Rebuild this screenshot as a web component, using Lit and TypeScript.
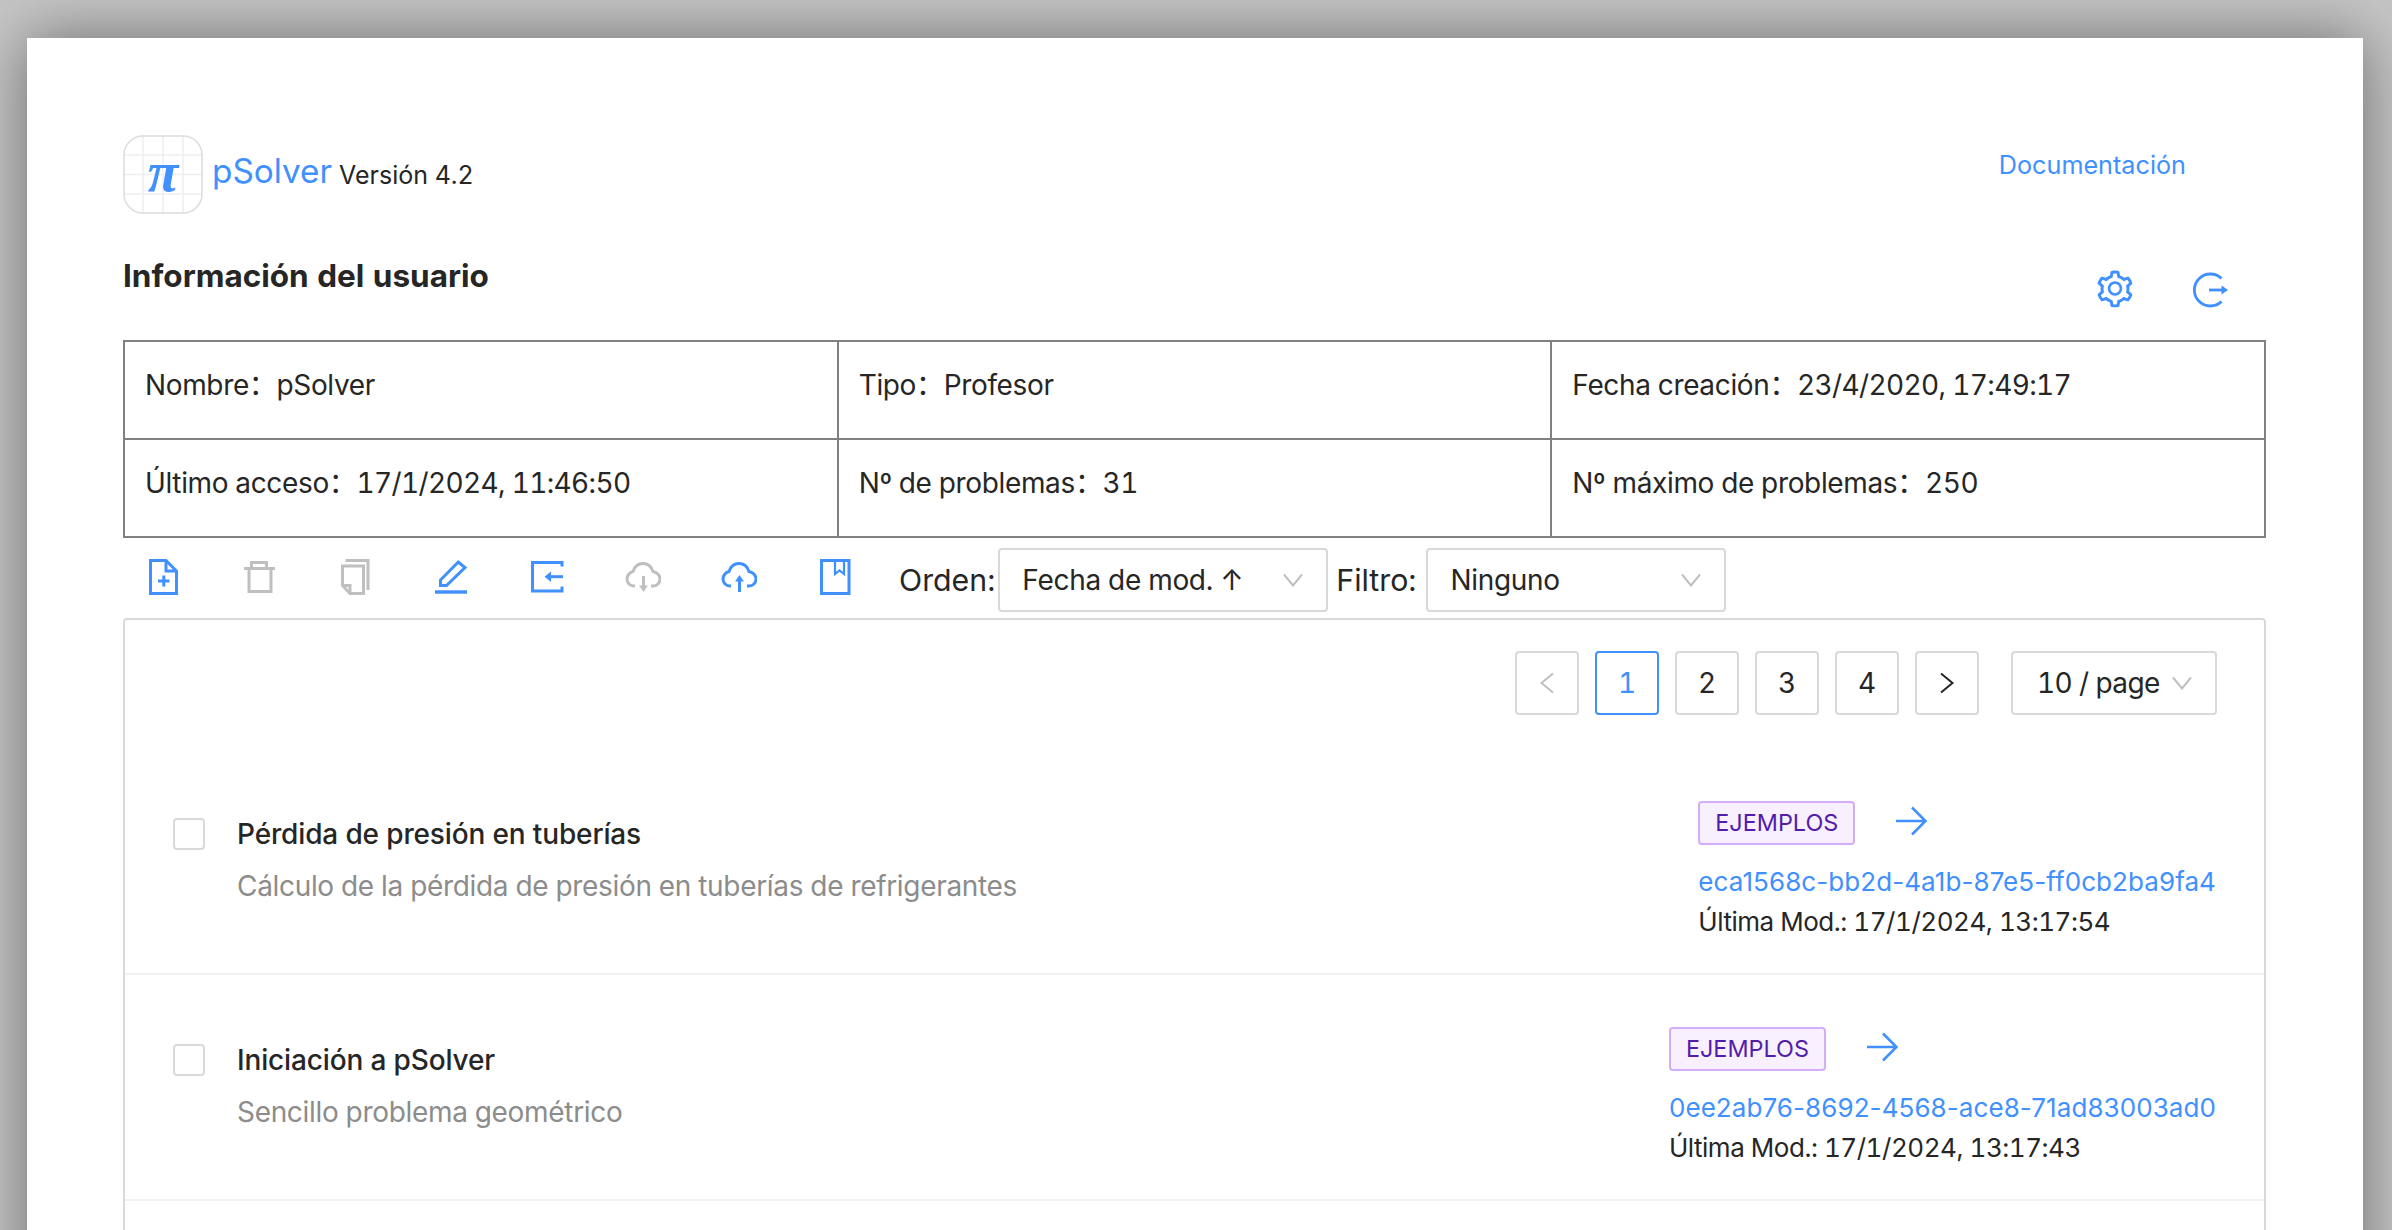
import { LitElement, html, css, svg } from 'lit';
import { customElement } from 'lit/decorators.js';

const BLUE = '#4090ff';
const GREY = '#bfbfbf';

interface Problem {
  title: string;
  desc: string;
  id: string;
  date: string;
}

const problems: Problem[] = [
  {
    title: 'Pérdida de presión en tuberías',
    desc: 'Cálculo de la pérdida de presión en tuberías de refrigerantes',
    id: 'eca1568c-bb2d-4a1b-87e5-ff0cb2ba9fa4',
    date: '17/1/2024, 13:17:54',
  },
  {
    title: 'Iniciación a pSolver',
    desc: 'Sencillo problema geométrico',
    id: '0ee2ab76-8692-4568-ace8-71ad83003ad0',
    date: '17/1/2024, 13:17:43',
  },
];

const cloud = svg`<path d="M10 27H9C5 27 2 24 2 20C2 16 5 13 8 12.5C9.5 8 13 4.5 18 4.5C23 4.5 26.5 8 28 12.5C31.5 13 35 16 35 20C35 24 32 27 28 27H26"/>`;

// toolbar icons are drawn on a 36px box, same as the reference's size
const toolIcons = [
  { color: BLUE, body: svg`<path d="M5.5 1.5H21L31.5 12V34.5H5.5Z"/><path d="M21 1.5V12H31.5"/><path d="M13 22H24.5M18.8 16.5V27.5"/>` },
  { color: GREY, body: svg`<path d="M3 9.5H34"/><path d="M10.5 9.5V3.5H25.5V9.5"/><path d="M8 9.5V32.5H30V9.5"/>` },
  { color: GREY, body: svg`<path d="M8.5 1.5H31V31"/><path d="M5.5 7H26.5V34.5H13L5.5 26.5Z"/><path d="M5.5 26.5H13V34.5"/>` },
  { color: BLUE, body: svg`<path d="M7.5 21L25.3 3L32 8.5L13.5 26.5H7.5Z"/><path d="M2 33H34" stroke-width="3.4"/>` },
  { color: BLUE, body: svg`<path d="M33 7.5V3.5H3.5V32H33V27.5"/><path d="M20 17.7H34"/><path d="M15.5 17.7L22 12.5V23Z" fill="currentColor" stroke="none"/>` },
  { color: GREY, body: svg`${cloud}<path d="M18.5 17V28"/><path d="M18.5 33L14 26.5H23Z" fill="currentColor" stroke="none"/>` },
  { color: BLUE, body: svg`${cloud}<path d="M18.5 21V33"/><path d="M18.5 16L14 22.5H23Z" fill="currentColor" stroke="none"/>` },
  { color: BLUE, body: svg`<path d="M4.5 1.5H32V34.5H4.5Z"/><path d="M18 2V15L22.5 11.5L27 15V2" stroke-width="2.2"/>` },
];

const gear = 'M924.8 625.7l-65.5-56c3.1-19 4.7-38.4 4.7-57.8s-1.6-38.8-4.7-57.8l65.5-56a32.03 32.03 0 009.3-35.2l-.9-2.6a443.74 443.74 0 00-79.7-137.9l-1.8-2.1a32.12 32.12 0 00-35.1-9.5l-81.3 28.9c-30-24.6-63.5-44-99.7-57.6l-15.7-85a32.05 32.05 0 00-25.8-25.7l-2.7-.5c-52.1-9.4-106.9-9.4-159 0l-2.7.5a32.05 32.05 0 00-25.8 25.7l-15.8 85.4a351.86 351.86 0 00-99 57.4l-81.9-29.1a32 32 0 00-35.1 9.5l-1.8 2.1a446.02 446.02 0 00-79.7 137.9l-.9 2.6c-4.5 12.5-.8 26.5 9.3 35.2l66.3 56.6c-3.1 18.8-4.6 38-4.6 57.1 0 19.2 1.5 38.4 4.6 57.1L99 625.5a32.03 32.03 0 00-9.3 35.2l.9 2.6c18.1 50.4 44.9 96.9 79.7 137.9l1.8 2.1a32.12 32.12 0 0035.1 9.5l81.9-29.1c29.8 24.5 63.1 43.9 99 57.4l15.8 85.4a32.05 32.05 0 0025.8 25.7l2.7.5a449.4 449.4 0 00159 0l2.7-.5a32.05 32.05 0 0025.8-25.7l15.7-85a350 350 0 0099.7-57.6l81.3 28.9a32 32 0 0035.1-9.5l1.8-2.1c34.8-41.1 61.6-87.5 79.7-137.9l.9-2.6c4.5-12.3.8-26.3-9.3-35zM788.3 465.9c2.5 15.1 3.8 30.6 3.8 46.1s-1.3 31-3.8 46.1l-6.6 40.1 74.7 63.9a370.03 370.03 0 01-42.6 73.6L721 702.8l-31.4 25.8c-23.9 19.6-50.5 35-79.3 45.8l-38.1 14.3-17.9 97a377.5 377.5 0 01-85 0l-17.9-97.2-37.8-14.5c-28.5-10.8-55-26.2-78.7-45.7l-31.4-25.9-93.4 33.2c-17-22.9-31.2-47.6-42.6-73.6l75.5-64.5-6.5-40c-2.4-14.9-3.7-30.3-3.7-45.5 0-15.3 1.2-30.6 3.7-45.5l6.5-40-75.5-64.5c11.3-26.1 25.6-50.7 42.6-73.6l93.4 33.2 31.4-25.9c23.7-19.5 50.2-34.9 78.7-45.7l37.9-14.3 17.9-97.2c28.1-3.2 56.8-3.2 85 0l17.9 97 38.1 14.3c28.7 10.8 55.4 26.2 79.3 45.8l31.4 25.8 92.8-32.9c17 22.9 31.2 47.6 42.6 73.6L781.8 426l6.5 39.9zM512 326c-97.2 0-176 78.8-176 176s78.8 176 176 176 176-78.8 176-176-78.8-176-176-176zm79.2 255.2A111.6 111.6 0 01512 614c-29.9 0-58-11.7-79.2-32.8A111.6 111.6 0 01400 502c0-29.9 11.7-58 32.8-79.2C454 401.6 482.1 390 512 390c29.9 0 58 11.6 79.2 32.8A111.6 111.6 0 01624 502c0 29.9-11.7 58-32.8 79.2z';

@customElement('app-root')
export class AppRoot extends LitElement {
  static styles = css`
    :host {
      --blue: #4090ff;
      --grey: #bfbfbf;
      display: block;
      height: 1230px;
      overflow: hidden;
      background: #c6c6c6;
      font-family: Inter, 'Noto Sans CJK SC', sans-serif;
      font-variant-numeric: tabular-nums;
      color: #262626;
    }

    .window {
      box-sizing: border-box;
      height: 1500px;
      margin: 38px 29px 0 27px;
      padding: 97px 97px 0 96px;
      background: #fff;
      box-shadow: 0 0 60px rgba(0, 0, 0, 0.46);
    }

    .brand-row {
      display: flex;
      align-items: flex-start;
      height: 78px;
    }

    .logo {
      width: 80px;
      height: 79px;
      flex: none;
    }

    .name {
      margin: 14px 0 0 9px;
      font-size: 33.3px;
      line-height: 44px;
      color: var(--blue);
    }

    .version {
      margin: 22px 0 0 7px;
      font-size: 25px;
      line-height: 36px;
    }

    .docs {
      margin: 10px 80px 0 auto;
      font-size: 25.2px;
      line-height: 40px;
      color: var(--blue);
    }

    .user-row {
      display: flex;
      align-items: flex-start;
      height: 127px;
    }

    h2 {
      margin: 38px 0 0 0;
      font-size: 31.5px;
      line-height: 50px;
      font-weight: 700;
    }

    .user-actions {
      display: flex;
      gap: 57px;
      margin: 55px 37px 0 auto;
      color: var(--blue);
    }

    .user-actions svg {
      display: block;
      width: 42px;
      height: 42px;
    }

    .user-actions svg.out {
      width: 36px;
      height: 36px;
      margin-top: 4px;
    }

    table {
      width: 100%;
      border-collapse: collapse;
      table-layout: fixed;
      font-size: 28px;
      letter-spacing: -0.35px;
    }

    td {
      height: 81px;
      padding: 0 0 15px 20px;
      border: 2px solid #808080;
      white-space: nowrap;
    }

    .stamp {
      letter-spacing: -0.65px;
    }

    .toolbar {
      box-sizing: border-box;
      display: flex;
      align-items: center;
      height: 80px;
      padding: 3px 0 0 22px;
    }

    .tools {
      display: flex;
      gap: 60px;
      margin-top: -5px;
    }

    .tools svg {
      display: block;
      width: 36px;
      height: 36px;
      fill: none;
      stroke: currentColor;
      stroke-width: 3;
    }

    .label {
      font-size: 30.3px;
      line-height: 64px;
    }

    .orden {
      margin-left: 46px;
      margin-right: 3px;
    }

    .filtro {
      margin: 0 10px 0 8px;
    }

    .select {
      box-sizing: border-box;
      display: flex;
      align-items: center;
      justify-content: space-between;
      height: 64px;
      padding: 0 22px;
      border: 2px solid #d9d9d9;
      border-radius: 4px;
      font-size: 28px;
      letter-spacing: -0.3px;
      white-space: nowrap;
    }

    .select svg {
      display: block;
      width: 22px;
      height: 14px;
      fill: none;
      stroke: var(--grey);
      stroke-width: 2;
    }

    .sort {
      width: 330px;
    }

    .filter {
      width: 300px;
    }

    .panel {
      box-sizing: border-box;
      min-height: 700px;
      border: 2px solid #d9d9d9;
      border-radius: 4px;
    }

    .pager {
      display: flex;
      justify-content: flex-end;
      gap: 16px;
      padding: 31px 47px 0 0;
    }

    .page {
      box-sizing: border-box;
      display: flex;
      align-items: center;
      justify-content: center;
      width: 64px;
      height: 64px;
      border: 2px solid #d9d9d9;
      border-radius: 4px;
      font-size: 28px;
    }

    .page.current {
      border-color: var(--blue);
      color: var(--blue);
    }

    .page svg {
      display: block;
      width: 16px;
      height: 22px;
      fill: none;
      stroke: currentColor;
      stroke-width: 2;
    }

    .page.off {
      color: var(--grey);
    }

    .size {
      width: 206px;
      margin-left: 16px;
      padding: 0 22px 0 24px;
      letter-spacing: -0.6px;
    }

    .items {
      margin-top: 34px;
    }

    .item {
      display: flex;
      align-items: flex-start;
      padding: 52px 48px 31px 48px;
      border-bottom: 2px solid #f0f0f0;
    }

    .check {
      box-sizing: border-box;
      flex: none;
      width: 32px;
      height: 32px;
      margin: 17px 32px 0 0;
      border: 2px solid #d9d9d9;
      border-radius: 4px;
    }

    .meta {
      flex: 1;
      padding-top: 13px;
    }

    .title {
      font-size: 28px;
      line-height: 40px;
      font-weight: 500;
      letter-spacing: -0.15px;
    }

    .desc {
      margin-top: 12px;
      font-size: 28px;
      line-height: 40px;
      letter-spacing: -0.32px;
      color: #8c8c8c;
    }

    .info {
      flex: none;
    }

    .tag-row {
      display: flex;
      align-items: center;
      height: 44px;
      margin-bottom: 17px;
    }

    .tag {
      box-sizing: border-box;
      height: 44px;
      padding: 0 15px;
      border: 2px solid #d3adf7;
      border-radius: 4px;
      background: #f9f0ff;
      color: #531dab;
      font-size: 23.4px;
      line-height: 40px;
    }

    .tag-row svg {
      display: block;
      width: 32px;
      height: 30px;
      margin: -4px 0 0 40px;
      fill: none;
      stroke: var(--blue);
      stroke-width: 2.6;
    }

    .uuid,
    .date {
      font-size: 26px;
      line-height: 40px;
      white-space: nowrap;
    }

    .uuid {
      font-variant-numeric: normal;
      letter-spacing: 0.08px;
      color: var(--blue);
    }

    .date {
      letter-spacing: -0.47px;
    }
  `;

  private renderLogo() {
    return html`<svg class="logo" viewBox="0 0 80 79">
      <path d="M20 1V78M40 1V78M60 1V78M1 20H79M1 39.5H79M1 59H79" fill="none" stroke="#eeeeee" stroke-width="1.5"/>
      <rect x="1" y="1" width="78" height="77" rx="19" fill="none" stroke="#dcdcdc" stroke-width="1.5"/>
      <text x="40" y="56" text-anchor="middle" font-family="'Liberation Serif', serif" font-style="italic" font-weight="700" font-size="56" fill=${BLUE}>π</text>
    </svg>`;
  }

  private renderChevron() {
    return html`<svg viewBox="0 0 22 14"><path d="M2 1.5L11 12.5L20 1.5"/></svg>`;
  }

  private renderItem(p: Problem) {
    return html`<div class="item">
      <div class="check"></div>
      <div class="meta">
        <div class="title">${p.title}</div>
        <div class="desc">${p.desc}</div>
      </div>
      <div class="info">
        <div class="tag-row">
          <span class="tag">EJEMPLOS</span>
          <svg viewBox="0 0 32 30"><path d="M1 15H30M17 1.5L30.5 15L17 28.5"/></svg>
        </div>
        <div class="uuid">${p.id}</div>
        <div class="date">Última Mod.: ${p.date}</div>
      </div>
    </div>`;
  }

  render() {
    return html`
      <div class="window">
        <div class="brand-row">
          ${this.renderLogo()}
          <span class="name">pSolver</span>
          <span class="version">Versión 4.2</span>
          <span class="docs">Documentación</span>
        </div>
        <div class="user-row">
          <h2>Información del usuario</h2>
          <div class="user-actions">
            <svg viewBox="0 0 1024 1024"><path fill="currentColor" d=${gear}/></svg>
            <svg class="out" viewBox="0 0 36 36" fill="none" stroke="currentColor" stroke-width="2.8">
              <path d="M28.5 6.5A16 16 0 1 0 28.5 29.5"/>
              <path d="M16 18H30"/>
              <path d="M35 18L28.5 13.5V22.5Z" fill="currentColor" stroke="none"/>
            </svg>
          </div>
        </div>
        <table>
          <tr>
            <td>Nombre：pSolver</td>
            <td>Tipo：Profesor</td>
            <td>Fecha creación：<span class="stamp">23/4/2020, 17:49:17</span></td>
          </tr>
          <tr>
            <td>Último acceso：<span class="stamp">17/1/2024, 11:46:50</span></td>
            <td>Nº de problemas：31</td>
            <td>Nº máximo de problemas：250</td>
          </tr>
        </table>
        <div class="toolbar">
          <div class="tools">
            ${toolIcons.map(i => html`<svg viewBox="0 0 36 36" style="color:${i.color}">${i.body}</svg>`)}
          </div>
          <span class="label orden">Orden:</span>
          <div class="select sort"><span>Fecha de mod. ↑</span>${this.renderChevron()}</div>
          <span class="label filtro">Filtro:</span>
          <div class="select filter"><span>Ninguno</span>${this.renderChevron()}</div>
        </div>
        <div class="panel">
          <div class="pager">
            <div class="page off"><svg viewBox="0 0 16 22"><path d="M14 1.5L2.5 11L14 20.5"/></svg></div>
            <div class="page current">1</div>
            <div class="page">2</div>
            <div class="page">3</div>
            <div class="page">4</div>
            <div class="page"><svg viewBox="0 0 16 22"><path d="M2 1.5L13.5 11L2 20.5"/></svg></div>
            <div class="select size"><span>10 / page</span>${this.renderChevron()}</div>
          </div>
          <div class="items">${problems.map(p => this.renderItem(p))}</div>
        </div>
      </div>
    `;
  }
}
